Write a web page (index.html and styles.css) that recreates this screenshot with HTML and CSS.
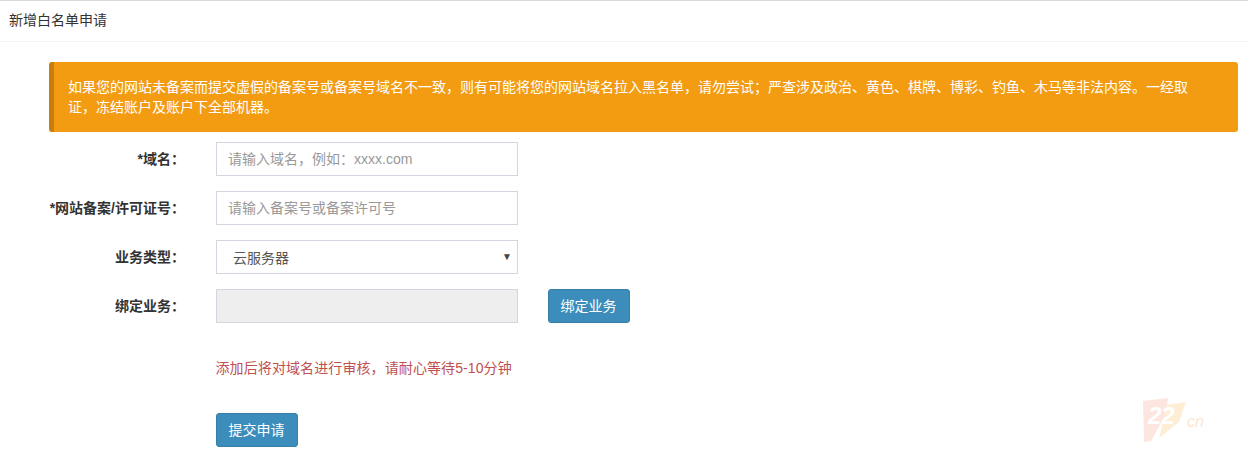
FILE: index.html
```html
<!DOCTYPE html>
<html lang="zh-CN">

<head>
  <title>新增白名单申请</title>
  <meta charset="UTF-8" />
  <link rel="stylesheet" href="styles.css">
</head>

<body>
  <div class="box">
    <div class="box-header">新增白名单申请</div>
    <div class="box-body">
      <div class="callout">如果您的网站未备案而提交虚假的备案号或备案号域名不一致，则有可能将您的网站域名拉入黑名单，请勿尝试；严查涉及政治、黄色、棋牌、博彩、钓鱼、木马等非法内容。一经取证，冻结账户及账户下全部机器。</div>
      <form class="form">
        <div class="row">
          <label class="row-label">*域名：</label>
          <input class="control" type="text" placeholder="请输入域名，例如：xxxx.com">
        </div>
        <div class="row">
          <label class="row-label">*网站备案/许可证号：</label>
          <input class="control" type="text" placeholder="请输入备案号或备案许可号">
        </div>
        <div class="row">
          <label class="row-label">业务类型：</label>
          <div class="control select">
            <span>云服务器</span>
            <span class="arrow">▼</span>
          </div>
        </div>
        <div class="row">
          <label class="row-label">绑定业务：</label>
          <input class="control" type="text" disabled>
          <button class="btn btn-bind" type="button">绑定业务</button>
        </div>
        <p class="notice">添加后将对域名进行审核，请耐心等待5-10分钟</p>
        <button class="btn btn-submit" type="button">提交申请</button>
      </form>
    </div>
  </div>

  <svg class="watermark" width="72" height="50" viewBox="0 0 72 50">
    <polygon points="4,3 29,0 27,16 12,43 5,44" fill="#fde6e0" />
    <polygon points="28,7 47,4 40,24 20,40" fill="#feeed6" />
    <text x="9" y="26" class="wm-num">22</text>
    <text x="48" y="29" class="wm-cn">cn</text>
  </svg>
</body>

</html>
```

FILE: styles.css
```css
body {
  margin: 0;
  background-color: #fff;
  color: #333;
  font-family: "Liberation Sans", "Noto Sans CJK SC", sans-serif;
  font-size: 14px;
}

.box {
  border-top: 1px solid #d9d9d9;
}

.box-header {
  height: 40px;
  padding-left: 9px;
  line-height: 39px;
  border-bottom: 1px solid #f4f4f4;
}

.box-body {
  padding: 20px 10px 0 49px;
}

.callout {
  box-sizing: border-box;
  height: 70px;
  padding: 15px 35px 15px 14px;
  background-color: #f39c12;
  border-left: 5px solid #c87f0a;
  border-radius: 3px;
  color: #fff;
  line-height: 20px;
}

.form {
  margin: 10px 0 0 -49px;
}

.row {
  display: flex;
  align-items: center;
  margin-bottom: 15px;
}

.row-label {
  box-sizing: border-box;
  width: 216px;
  padding-right: 31px;
  font-weight: bold;
  line-height: 34px;
  text-align: right;
}

.control {
  box-sizing: border-box;
  width: 302px;
  height: 34px;
  padding: 0 12px 0 11px;
  background-color: #fff;
  border: 1px solid #d2d6de;
  color: #555;
  font-family: inherit;
  font-size: 14px;
}

.control::placeholder {
  color: #999;
}

.control:disabled {
  background-color: #eee;
}

.select {
  display: flex;
  align-items: center;
  justify-content: space-between;
  padding: 0 5px 0 16px;
}

.arrow {
  font-size: 10px;
  color: #444;
  line-height: 32px;
}

.btn {
  box-sizing: border-box;
  width: 82px;
  height: 34px;
  padding: 0 1px 2px 0;
  background-color: #3c8dbc;
  border: 1px solid #367fa9;
  border-radius: 3px;
  color: #fff;
  font-family: inherit;
  font-size: 14px;
}

.btn-bind {
  margin-left: 30px;
}

.btn-submit {
  display: block;
  margin-left: 216px;
}

.notice {
  margin: 35px 0 35px 215.5px;
  color: #c0504d;
  line-height: 20px;
  letter-spacing: 0.1px;
}

.watermark {
  position: absolute;
  left: 1139px;
  top: 398px;
}

.wm-num {
  fill: #fff;
  font-family: "Liberation Sans", sans-serif;
  font-size: 24px;
  font-weight: bold;
  font-style: italic;
}

.wm-cn {
  fill: #fce6d2;
  font-family: "Liberation Sans", sans-serif;
  font-size: 16px;
  font-style: italic;
}
```
